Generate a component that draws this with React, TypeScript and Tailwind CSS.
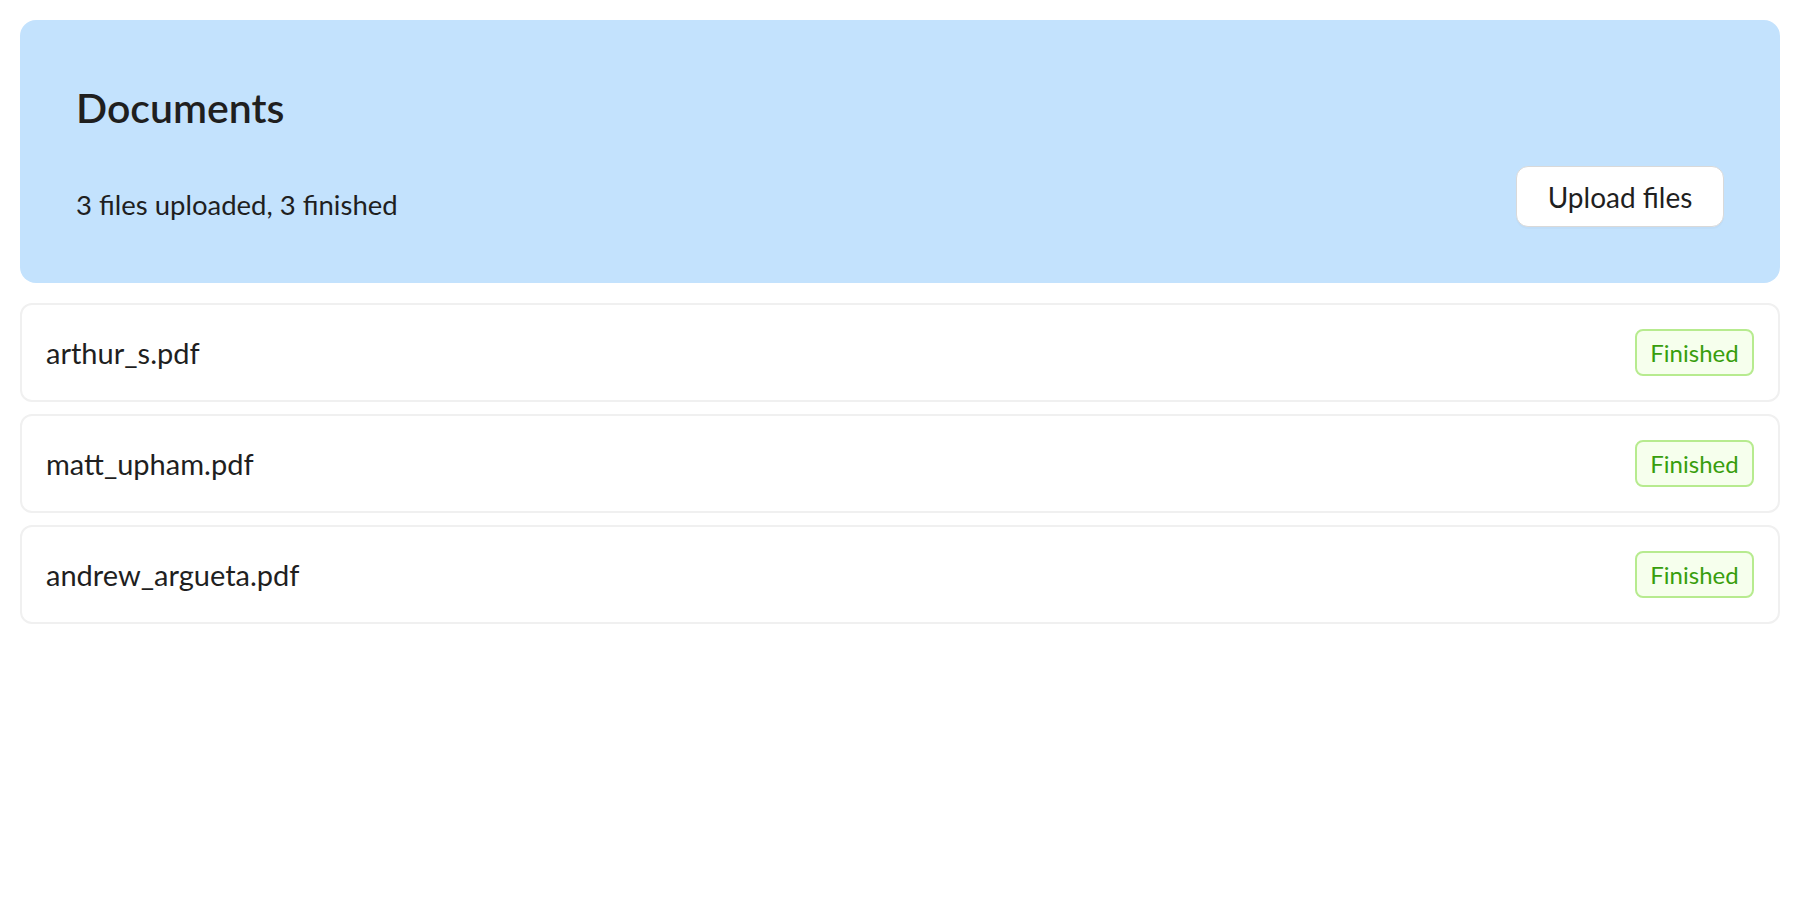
import React from "react";

const files = ["arthur_s.pdf", "matt_upham.pdf", "andrew_argueta.pdf"];

export default function App() {
  return (
    <div
      className="min-h-screen bg-white p-5 text-[#1f1f1f]"
      style={{ fontFamily: "Lato, 'Noto Sans', sans-serif" }}
    >
      <div className="rounded-2xl bg-[#c3e2fd] px-14 pt-16 pb-14">
        <h1 className="text-[41px] font-semibold leading-[48px]">Documents</h1>
        <div className="mt-[34px] flex items-end justify-between">
          <p className="text-[27.5px] leading-[40px] pb-[2px]">3 files uploaded, 3 finished</p>
          <button className="h-[61px] w-[208px] rounded-xl border border-[#d9d9d9] bg-white text-[28px] shadow-[0_2px_0_rgba(0,0,0,0.02)]">
            Upload files
          </button>
        </div>
      </div>
      <div className="mt-5 flex flex-col gap-3">
        {files.map((f) => (
          <div
            key={f}
            className="flex h-[99px] items-center justify-between rounded-xl border-2 border-[#f0f0f0] px-6"
          >
            <span className="text-[29px]">{f}</span>
            <span className="flex h-[47px] w-[119px] items-center justify-center rounded-lg border-2 border-[#b7eb8f] bg-[#f6ffed] text-[24px] text-[#389e0d]">
              Finished
            </span>
          </div>
        ))}
      </div>
    </div>
  );
}
